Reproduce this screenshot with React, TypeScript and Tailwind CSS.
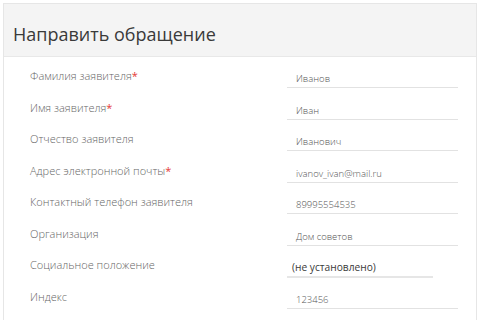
import React from "react";

const rows: { label: string; req?: boolean; value: string; select?: boolean }[] = [
  { label: "Фамилия заявителя", req: true, value: "Иванов" },
  { label: "Имя заявителя", req: true, value: "Иван" },
  { label: "Отчество заявителя", value: "Иванович" },
  { label: "Адрес электронной почты", req: true, value: "ivanov_ivan@mail.ru" },
  { label: "Контактный телефон заявителя", value: "89995554535" },
  { label: "Организация", value: "Дом советов" },
  { label: "Социальное положение", value: "(не установлено)", select: true },
  { label: "Индекс", value: "123456" },
];

export default function App() {
  return (
    <div className="w-[480px] h-[320px] overflow-hidden bg-white pt-[3px] pl-[3px]" style={{ fontFamily: '"Open Sans", sans-serif' }}>
      <div className="w-[474px] h-[330px] border border-[#e6e6e6] bg-white">
        <div className="h-[53px] bg-[#f4f4f4] border-b border-[#e8e8e8] flex items-center pl-[9px] pt-[7px]">
          <h1 className="text-[18px] text-[#3a3a3a] leading-none">Направить обращение</h1>
        </div>
        <div className="pt-[5px]">
          {rows.map((r) => (
            <div key={r.label} className="flex h-[31.57px]">
              <div className="w-[283px] pl-[26px] pt-[5px] text-[11px] font-light leading-[18px] text-[#666]">
                {r.label}
                {r.req && <span className="text-[#e53935] font-normal">*</span>}
              </div>
              {r.select ? (
                <div className="mt-[4px] w-[146px] h-[23px] border-b-2 border-[#e6e6e6] pl-[5px] pt-[2px] text-[10.2px] leading-[21px] text-[#3a3a3a]">
                  {r.value}
                </div>
              ) : (
                <div className="mt-[4px] w-[171px] h-[22px] border-b border-[#e2e2e2] pl-[9px] pt-[3px] text-[9.5px] font-light leading-[19px] text-[#555]">
                  {r.value}
                </div>
              )}
            </div>
          ))}
        </div>
      </div>
    </div>
  );
}
